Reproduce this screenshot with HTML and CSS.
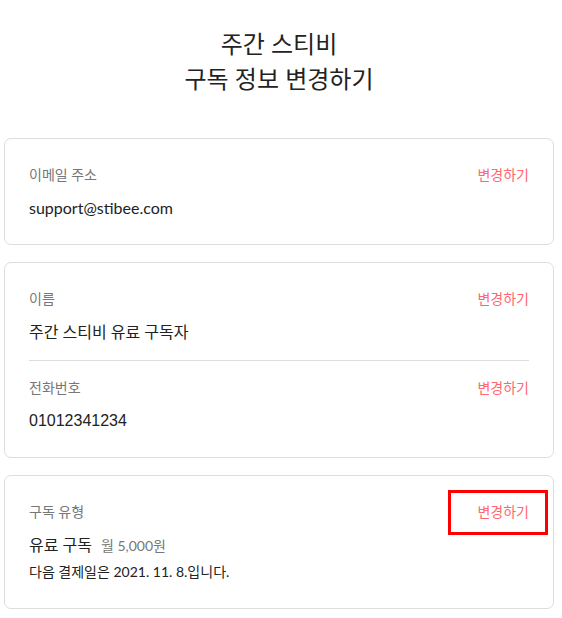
FILE: index.html
```html
<!DOCTYPE html>
<html lang="ko">
<head>
<meta charset="utf-8">
<title>주간 스티비 구독 정보 변경하기</title>
<link rel="stylesheet" href="styles.css">
</head>
<body>
<div class="page">
  <h1 class="title">주간 스티비<br>구독 정보 변경하기</h1>

  <section class="card">
    <div class="field">
      <div class="field-head">
        <span class="label">이메일 주소</span>
        <a class="change">변경하기</a>
      </div>
      <div class="value">support@stibee.com</div>
    </div>
  </section>

  <section class="card">
    <div class="field">
      <div class="field-head">
        <span class="label">이름</span>
        <a class="change">변경하기</a>
      </div>
      <div class="value">주간 스티비 유료 구독자</div>
    </div>
    <hr class="divider">
    <div class="field">
      <div class="field-head">
        <span class="label">전화번호</span>
        <a class="change">변경하기</a>
      </div>
      <div class="value phone">01012341234</div>
    </div>
  </section>

  <section class="card">
    <div class="field">
      <div class="field-head">
        <span class="label">구독 유형</span>
        <a class="change highlighted">변경하기</a>
      </div>
      <div class="value">유료 구독<span class="price">월 5,000원</span></div>
      <div class="note">다음 결제일은 2021. 11. 8.입니다.</div>
    </div>
  </section>
</div>
</body>
</html>
```

FILE: styles.css
```css
html, body {
  margin: 0;
  padding: 0;
  background: #ffffff;
}

body {
  font-family: "Lato", "Noto Sans CJK KR", sans-serif;
  color: #222222;
}

.page {
  width: 550px;
  margin: 0 0 0 4px;
  padding-top: 26px;
  display: flex;
  flex-direction: column;
  gap: 17px;
}

.title {
  margin: 0 0 25px 0;
  font-size: 24px;
  line-height: 35px;
  font-weight: 400;
  text-align: center;
  color: #222222;
}

.card {
  border: 1px solid #dddddd;
  border-radius: 7px;
  padding: 24px 24px 23px 24px;
}

.field-head {
  display: flex;
  justify-content: space-between;
  align-items: center;
  height: 24px;
}

.label {
  font-size: 14px;
  line-height: 24px;
  color: #777777;
}

.change {
  position: relative;
  font-size: 14px;
  line-height: 24px;
  color: #ff6670;
  cursor: pointer;
}

.highlighted::after {
  content: "";
  position: absolute;
  left: -29px;
  right: -19px;
  top: -10px;
  bottom: -11px;
  border: 3px solid #ff0000;
  box-sizing: border-box;
}

.value {
  margin-top: 8px;
  font-size: 16px;
  line-height: 26px;
  color: #222222;
}

.phone {
  font-family: "Liberation Sans", "Noto Sans CJK KR", sans-serif;
}

.price {
  margin-left: 9px;
  font-size: 14px;
  color: #777777;
}

.note {
  font-size: 14px;
  line-height: 26px;
  color: #222222;
}

.divider {
  border: 0;
  border-top: 1px solid #dddddd;
  margin: 15px 0;
}
```
